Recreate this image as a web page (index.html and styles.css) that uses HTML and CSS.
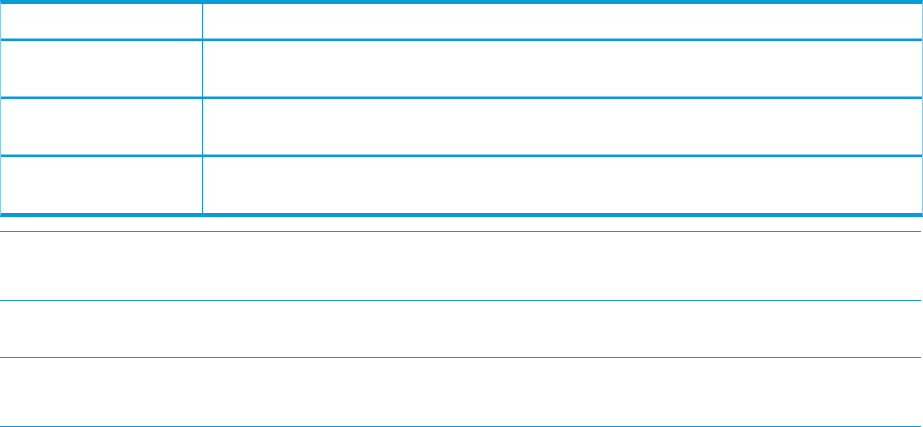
FILE: index.html
```html
<!DOCTYPE html>
<html>
<head>
<meta charset="utf-8">
<link rel="stylesheet" href="styles.css">
</head>
<body>
<div class="frame">
  <div class="row head"><div class="c1"></div><div class="c2"></div></div>
  <div class="row r1"><div class="c1"></div><div class="c2"></div></div>
  <div class="row r2"><div class="c1"></div><div class="c2"></div></div>
  <div class="row r3 last"><div class="c1"></div><div class="c2"></div></div>
</div>
<div class="list">
  <div class="item i1"></div>
  <div class="item i2"></div>
  <div class="item i3"></div>
</div>
</body>
</html>
```
FILE: styles.css
```css
html, body { margin: 0; padding: 0; background: #fff; font-family: "Liberation Sans", Arial, sans-serif; }
.frame {
  width: 921px;
  border-top: 4px solid #079cd8;
  border-left: 1px solid #86cdee;
  border-right: 1px solid #86cdee;
  border-bottom: 4px solid #079cd8;
  margin-left: 0;
}
.row {
  display: grid;
  grid-template-columns: 202px 1fr;
  border-bottom: 2px solid #079cd8;
  box-shadow: inset 0 -1px 0 #86cdee;
}
.row.last { border-bottom: 0; box-shadow: none; }
.head { height: 35px; }
.r1 { height: 56px; }
.r2 { height: 56px; }
.r3 { height: 56px; }
.c1 { border-right: 1px solid #1a93d0; }
.list { margin-top: 14px; width: 921px; border-top: 1px solid #1a93d0; }
.item { border-bottom: 1px solid #1a93d0; }
.i1 { height: 68px; }
.i2 { height: 56px; }
.i3 { height: 68px; }
```
